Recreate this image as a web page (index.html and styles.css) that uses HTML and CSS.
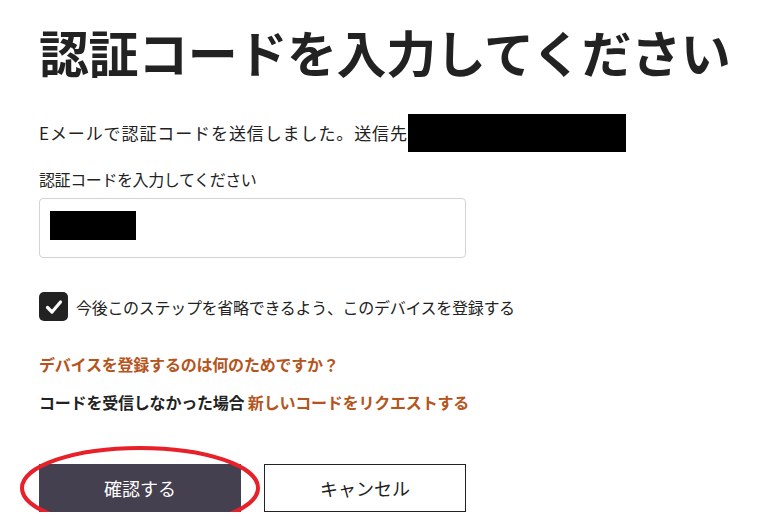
FILE: index.html
```html
<!DOCTYPE html>
<html lang="ja">
<head>
    <meta charset="UTF-8">
    <meta name="viewport" content="width=device-width, initial-scale=1.0">
    <title>認証コードを入力してください</title>
    <link rel="stylesheet" href="styles.css">
</head>
<body>
    <div class="verify-page">
        <h1 class="verify-title">認証コードを入力してください</h1>

        <p class="sent-note">Eメールで認証コードを送信しました。送信先<span class="redacted redacted-email"></span></p>

        <div class="input-group">
            <label for="otpCode">認証コードを入力してください</label>
            <div class="code-box">
                <span class="redacted redacted-code"></span>
            </div>
        </div>

        <label class="remember-row">
            <span class="check-box">
                <svg width="18" height="16" viewBox="0 0 18 16"><path d="M2.5 8.5 L7 13 L15.5 3" fill="none" stroke="#fff" stroke-width="3.2" stroke-linecap="round" stroke-linejoin="round"/></svg>
            </span>
            <span>今後このステップを省略できるよう、このデバイスを登録する</span>
        </label>

        <a class="link why-link" href="#">デバイスを登録するのは何のためですか？</a>

        <p class="resend-line">コードを受信しなかった場合 <a class="link" href="#">新しいコードをリクエストする</a></p>

        <div class="actions">
            <button class="btn btn-primary" type="button">確認する</button>
            <button class="btn btn-secondary" type="button">キャンセル</button>
            <svg class="highlight" width="244" height="90" viewBox="0 0 244 90">
                <ellipse cx="122" cy="45" rx="118" ry="40" fill="none" stroke="#e8202a" stroke-width="4"/>
            </svg>
        </div>
    </div>
</body>
</html>
```

FILE: styles.css
```css
/* Base Reset */
* {
    margin: 0;
    padding: 0;
    box-sizing: border-box;
}

body {
    font-family: "Noto Sans CJK JP", "Noto Sans", sans-serif;
    background: #fff;
    color: #222;
}

.verify-page {
    padding: 24px 0 0 39px;
}

/* Heading */
.verify-title {
    font-size: 50px;
    font-weight: 700;
    line-height: 54px;
    letter-spacing: -0.4px;
    color: #222;
}

.sent-note {
    display: flex;
    align-items: center;
    margin-top: 36px;
    font-size: 17px;
    line-height: 38px;
    letter-spacing: 0.9px;
}

.redacted {
    display: inline-block;
    background: #000;
}

.redacted-email {
    width: 218px;
    height: 38px;
}

/* Code input */
.input-group {
    margin-top: 15px;
}

.input-group label {
    display: block;
    font-size: 16px;
    line-height: 24px;
    letter-spacing: -0.4px;
    margin-bottom: 7px;
}

.code-box {
    width: 427px;
    height: 60px;
    border: 1px solid #d3d3d3;
    border-radius: 4px;
    padding: 12px 0 0 10px;
}

.redacted-code {
    width: 86px;
    height: 29px;
}

/* Checkbox row */
.remember-row {
    display: flex;
    align-items: center;
    gap: 8px;
    margin-top: 34px;
    font-size: 16px;
    letter-spacing: -0.3px;
}

.check-box {
    width: 29px;
    height: 29px;
    border-radius: 5px;
    background: #222;
    display: flex;
    align-items: center;
    justify-content: center;
}

/* Links */
.link {
    color: #b5541c;
    text-decoration: none;
    font-weight: 700;
}

.why-link {
    display: block;
    margin-top: 31px;
    font-size: 16px;
    line-height: 24px;
    letter-spacing: -0.2px;
}

.resend-line {
    margin-top: 14px;
    font-size: 16px;
    line-height: 24px;
    font-weight: 700;
    letter-spacing: -0.2px;
}

/* Buttons */
.actions {
    position: relative;
    display: flex;
    gap: 23px;
    margin-top: 50px;
}

.btn {
    width: 202px;
    height: 48px;
    font-family: inherit;
    font-size: 18px;
    cursor: pointer;
}

.btn-primary {
    background: #45404f;
    color: #fff;
    border: none;
}

.btn-secondary {
    background: #fff;
    color: #222;
    border: 1px solid #222;
}

.highlight {
    position: absolute;
    left: -21px;
    top: -21px;
    pointer-events: none;
}
```
